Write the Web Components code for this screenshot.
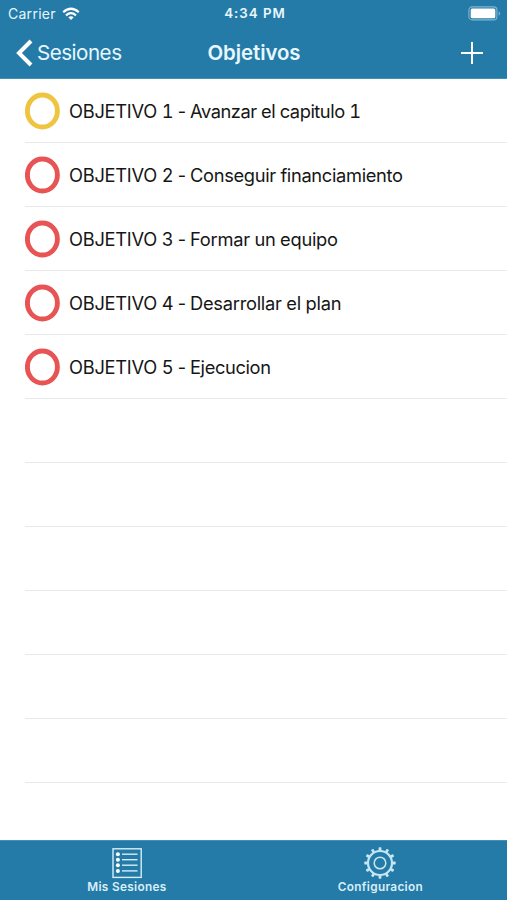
<!DOCTYPE html>
<html lang="es">
<head>
<meta charset="utf-8">
<title>Objetivos</title>
<style>
html,body{margin:0;height:100%;background:#fff}
body{font-family:Inter,"Liberation Sans",sans-serif}
</style>
</head>
<body>
<goals-app></goals-app>
<script>
const define = (name, html, init) => customElements.define(name, class extends HTMLElement {
  connectedCallback() {
    if (this.shadowRoot) return;
    this.attachShadow({mode: 'open'}).innerHTML = html;
    if (init) init(this, this.shadowRoot);
  }
});

// A single-line label whose tracking is adjusted to fill the width in its "fit" attribute.
define('fit-label', `<style>
  :host{display:block;white-space:nowrap;flex:none}
  span{display:inline-block}
</style><span><slot></slot></span>`, (el, root) => {
  const span = root.querySelector('span');
  const fit = parseFloat(el.getAttribute('fit'));
  const count = el.textContent.length;
  const natural = span.getBoundingClientRect().width;
  if (count > 1) span.style.letterSpacing = ((fit - natural) / (count - 1)).toFixed(3) + 'px';
  el.style.width = fit + 'px';
});

define('status-bar', `<style>
  :host{display:grid;grid-template-columns:1fr auto 1fr;align-items:center;height:27px;padding:0 6px 0 8px;color:#e8f6fc;font-size:14px;line-height:27px}
  .left{display:flex;align-items:center;gap:6px}
  .time{font-weight:600;font-size:13.3px}
  .right{display:flex;justify-content:flex-end}
  svg{display:block}
</style>
<div class="left"><fit-label fit="47.5">Carrier</fit-label>
<svg width="18" height="14" viewBox="0 0 18 14" fill="none" stroke="#fff" stroke-width="2.2"><path d="M1.2 5.2Q9 -1.7 16.8 5.2M4 8.3Q9 4 14 8.3"/><path d="M9 13L6.3 10.3Q9 8.2 11.7 10.3Z" fill="#fff" stroke="none"/></svg></div>
<fit-label class="time" fit="60.5">4:34 PM</fit-label>
<div class="right"><svg width="33" height="15" viewBox="0 0 33 15"><rect x=".9" y=".9" width="28" height="13" rx="3.2" fill="none" stroke="#81b5d1" stroke-width="1.1"/><rect x="2.7" y="2.6" width="24.6" height="9.6" rx="1.5" fill="#fff"/><path d="M30.7 5.2Q33.7 7.5 30.7 9.8Z" fill="#81b5d1"/></svg></div>`);

define('nav-bar', `<style>
  :host{display:grid;grid-template-columns:1fr auto 1fr;align-items:center;height:51px;padding:0 24px 0 16px;color:#e8f7fd;font-size:20.6px;line-height:51px}
  .back{display:flex;align-items:center;gap:4px}
  .title{font-weight:600;font-size:20.4px;padding-left:9px}
  .add{display:flex;justify-content:flex-end}
  svg{display:block}
</style>
<div class="back"><svg width="17" height="28" viewBox="0 0 17 28" fill="none" stroke="#fff" stroke-width="4"><path d="M15 2L3 14L15 26"/></svg><fit-label fit="85">Sesiones</fit-label></div>
<fit-label class="title" fit="93">Objetivos</fit-label>
<div class="add"><svg width="22" height="22" viewBox="0 0 22 22" stroke="#fff" stroke-width="2"><path d="M11 0V22M0 11H22"/></svg></div>`);

define('goal-row', `<style>
  :host{display:block;height:64px;padding-left:25px}
  .line{display:flex;align-items:center;box-sizing:border-box;height:64px;border-bottom:1px solid #e9e9ea;color:#161616;font-size:18.3px;font-variant-numeric:tabular-nums}
  svg{display:block;flex:none;margin-right:9px}
  .dash{margin:0 5px 0 2.5px}
</style><div class="line"></div>`, (el, root) => {
  const text = el.getAttribute('label');
  if (!text) return;
  const [name, task] = text.split(' - ');
  root.querySelector('.line').innerHTML =
    `<svg width="35" height="38" viewBox="0 0 35 38"><ellipse cx="17.4" cy="19" rx="15" ry="16" fill="none" stroke="${el.getAttribute('color')}" stroke-width="4.9"/></svg>` +
    `<fit-label fit="104.5">${name}</fit-label><fit-label class="dash" fit="9">-</fit-label><fit-label fit="${el.getAttribute('fit')}">${task}</fit-label>`;
});

define('tab-item', `<style>
  :host{display:flex;flex:1;flex-direction:column;align-items:center;color:#d9eef8;font-size:11.8px;font-weight:600;line-height:14px;padding-top:6px;gap:1px}
  ::slotted(svg){display:block}
</style><slot></slot><slot name="label"></slot>`);

const teeth = Array.from({length: 12}, (_, i) =>
  `<rect x="14.6" y=".3" width="2.8" height="3.4" rx=".6" fill="#c6e6f4" stroke="none" transform="rotate(${i * 30} 16 16)"/>`).join('');
const bullets = [7.2, 12.7, 18.2, 23.9].map(y =>
  `<circle cx="6.9" cy="${y}" r="2" fill="#fff" stroke="none"/><path d="M11 ${y}H26.5" stroke-width="1.4"/>`).join('');

define('tab-bar', `<style>
  :host{display:flex;box-sizing:border-box;height:60px;background:#247ba8;border-top:1px solid #448fb4}
</style>
<tab-item><svg width="32" height="32" viewBox="0 0 32 32" fill="none" stroke="#d5eef8" stroke-width="1.4"><rect x="2" y="1.8" width="28.2" height="28.6"/>${bullets}</svg><fit-label slot="label" fit="79">Mis Sesiones</fit-label></tab-item>
<tab-item><svg width="32" height="32" viewBox="0 0 32 32" fill="none" stroke="#c6e6f4"><circle cx="16" cy="16" r="12" stroke-width="2.2"/><circle cx="16" cy="16" r="5.8" stroke-width="1.5"/>${teeth}</svg><fit-label slot="label" fit="85">Configuracion</fit-label></tab-item>`);

const goals = [
  ['OBJETIVO 1 - Avanzar el capitulo 1', '#efc440', 171],
  ['OBJETIVO 2 - Conseguir financiamiento', '#e85354', 213],
  ['OBJETIVO 3 - Formar un equipo', '#e85354', 148],
  ['OBJETIVO 4 - Desarrollar el plan', '#e85354', 151.5],
  ['OBJETIVO 5 - Ejecucion', '#e85354', 81]
];
define('goals-app', `<style>
  :host{display:flex;flex-direction:column;height:900px;overflow:hidden}
  header{height:79px;box-sizing:border-box;background:#247ba8;border-bottom:1px solid #448fb4}
  main{flex:1;background:#fff}
</style>
<header><status-bar></status-bar><nav-bar></nav-bar></header>
<main>${goals.map(([t, c, w]) => `<goal-row label="${t}" color="${c}" fit="${w}"></goal-row>`).join('')}${'<goal-row></goal-row>'.repeat(6)}</main>
<tab-bar></tab-bar>`);
</script>
</body>
</html>
